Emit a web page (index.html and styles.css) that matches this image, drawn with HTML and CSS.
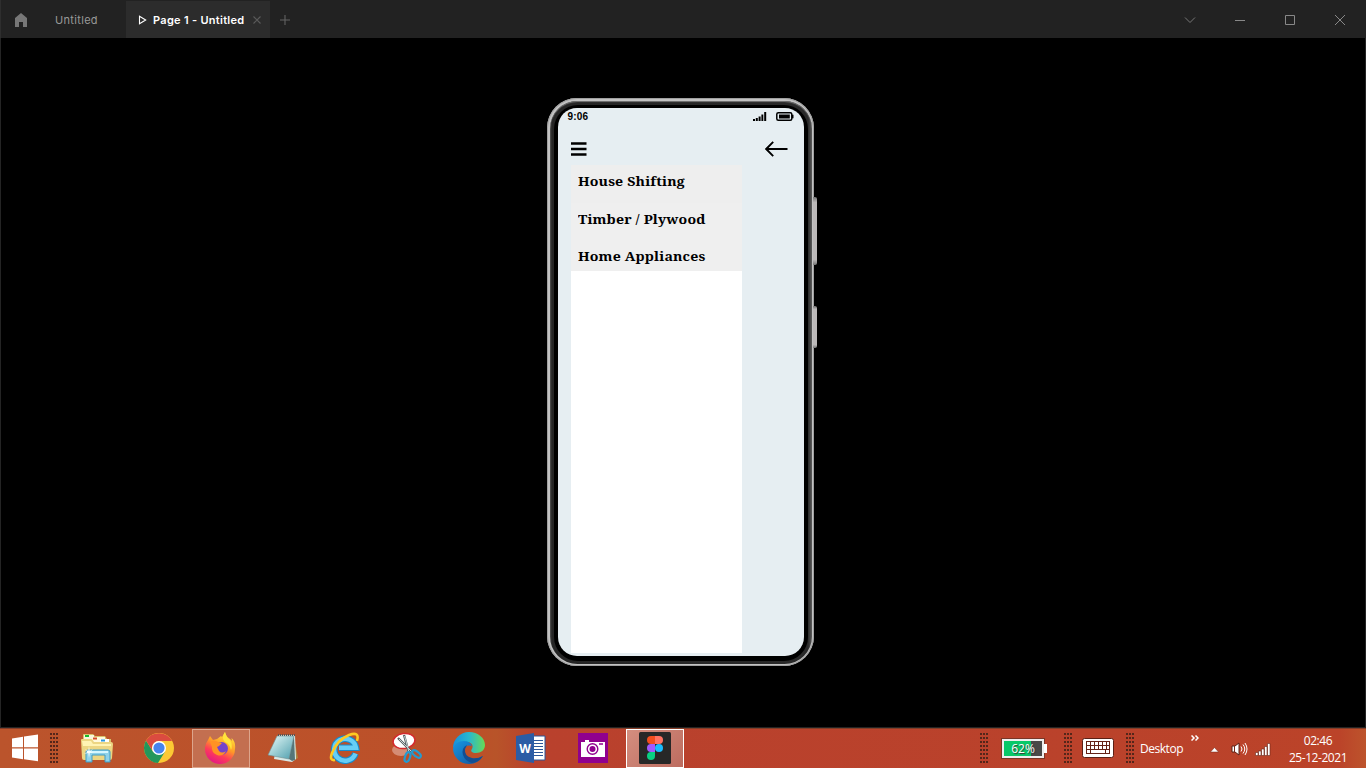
FILE: index.html
```html
<!DOCTYPE html>
<html lang="en">
<head>
<meta charset="utf-8">
<title>Page 1 - Untitled</title>
<link rel="stylesheet" href="styles.css">
</head>
<body>
<header class="titlebar">
  <div class="home"><svg width="14" height="16" viewBox="0 0 14 16"><path d="M7 1 13 6v9H9v-5H5v5H1V6z" fill="#777"/></svg></div>
  <div class="tab"><span class="tab-name">Untitled</span></div>
  <div class="tab active">
    <svg class="play" width="9" height="10" viewBox="0 0 9 10"><path d="M1.5 1.2v7.6L7.7 5z" fill="none" stroke="#fff" stroke-width="1.1"/></svg>
    <span class="active-name">Page 1 - Untitled</span>
    <svg class="close-tab" width="8" height="8" viewBox="0 0 8 8"><path d="m.5.5 7 7m0-7-7 7" stroke="#5b5b5b" stroke-width="1.1"/></svg>
  </div>
  <div class="plus"><svg width="10" height="10" viewBox="0 0 10 10"><path d="M5 0v10M0 5h10" stroke="#626262" stroke-width="1.1"/></svg></div>
  <div class="controls">
    <svg width="12" height="12" viewBox="0 0 12 12"><path d="m1 3.5 5 5 5-5" fill="none" stroke="#777"/></svg>
    <svg width="12" height="12" viewBox="0 0 12 12"><path d="M1 6.5h10" stroke="#888"/></svg>
    <svg width="12" height="12" viewBox="0 0 12 12"><path d="M1.5 1.5h9v9h-9z" fill="none" stroke="#888"/></svg>
    <svg width="12" height="12" viewBox="0 0 12 12"><path d="m1 1 10 10M11 1 1 11" stroke="#888"/></svg>
  </div>
</header>

<main class="stage">
  <div class="phone">
    <i class="side-key volume"></i><i class="side-key power"></i>
    <div class="metal"><div class="bezel"><div class="screen">
      <div class="status">
        <span>9:06</span>
        <svg class="signal" width="14" height="9" viewBox="0 0 14 9"><path d="M0 7h2v2H0zM2.8 6h2v3h-2zM5.6 4.5h2V9h-2zM8.4 2.5h1.900V9H8.4zM11.2 0h2v9h-2z"/></svg>
        <svg class="charge" width="18" height="9" viewBox="0 0 18 9"><rect x=".8" y=".8" width="15" height="7.4" rx="1.5" fill="none" stroke="#000" stroke-width="1.5"/><path d="M3 2.5h10.800v4H3zM16 2.800h1.500v3.400H16z"/></svg>
      </div>
      <div class="appbar">
        <svg width="16" height="14" viewBox="0 0 16 14"><path d="M0 1.500h15.500M0 7h15.500M0 12.500h15.500" stroke="#000" stroke-width="2.300"/></svg>
        <svg width="23" height="16" viewBox="0 0 23 16"><path d="M8.2.9 1.2 8l7 7.1M1.2 8H22.5" fill="none" stroke="#000" stroke-width="1.9"/></svg>
      </div>
      <nav class="drawer">
        <div class="entry first"><span>House Shifting</span></div>
        <div class="entry"><span>Timber / Plywood</span></div>
        <div class="entry last"><span>Home Appliances</span></div>
      </nav>
    </div></div></div>
  </div>
</main>

<footer class="taskbar">
  <svg class="start" width="28" height="28" viewBox="0 0 28 28"><path d="M1 4.4 12 2.8v10.5H1zM13 2.6 27 .6v12.7H13zM1 14.4h11v10.8L1 23.6zM13 14.4h14v12.8l-14-2z" fill="#fff"/></svg>
  <i class="grip"></i>
  <div class="apps">
    <div class="app"><svg width="34" height="32" viewBox="0 0 34 32"><path d="M3 9V3q0-1 1-1h9l2 2h10l2 3h4v5z" fill="#d9c36c"/><path d="M4 3h10v4H4z" fill="#f8f5dc"/><path d="M5 3h4v2H5z" fill="#16bc2d"/><path d="M12 5h13v5H12z" fill="#fff9dc"/><path d="M13 5.500h4v2h-4z" fill="#d34b2c"/><path d="M20 7h9v4h-9z" fill="#fff"/><path d="M21 7.500h4v2h-4z" fill="#2998df"/><path d="M1 8q0-1 1-1h10l2 3h17q2 0 2 2l-1 14q0 2-2 2H4q-2 0-2-2z" fill="#ecd683"/><path d="M2 9h9l2 3h18v2H3z" fill="#fff3b4"/><path d="M6 30V20q0-2 2-2h20q2 0 2 2v10h-5v-7H12v7z" fill="#8ed2e9" stroke="#3e9cc3"/><path d="M7 20h21" stroke="#d4f7ff" stroke-width="2"/><path d="m9 14 .8 5 3.200-2-2.500 3 4 1-4.500-.2L9 26l-.8-5-4.200 1 3.500-2-2.500-3 3.200 2z" fill="#fff" opacity=".8"/></svg></div>
    <div class="app"><svg width="32" height="32" viewBox="0 0 32 32"><circle cx="16" cy="16" r="15" fill="#fcc934"/><path d="M16 16 22.1 19.5 15 31A15 15 0 0 1 3 8.5L9.9 19.5z" fill="#23975b"/><path d="M3 8.5A15 15 0 0 1 29 9H16a7 7 0 0 0-6 10.5z" fill="#db4b40"/><circle cx="16" cy="16" r="7" fill="#fff"/><circle cx="16" cy="16" r="5.600" fill="#4684ed"/></svg></div>
    <div class="app running"><svg width="32" height="32" viewBox="0 0 32 32"><defs><linearGradient id="fire" x1=".8" y1="0" x2=".3" y2="1"><stop stop-color="#fff33d"/><stop offset=".45" stop-color="#ff9a27"/><stop offset=".7" stop-color="#ff3d58"/><stop offset="1" stop-color="#e31587"/></linearGradient></defs><path d="M3 8 5 4l3 4 4-1 4-3 1 1 3-5q1 5 5 7l2 2-.5-3q4.500 4 3.500 11A15 15 0 1 1 3 8z" fill="url(#fire)"/><circle cx="16.500" cy="16.500" r="6.500" fill="#7543cb"/><path d="M5 10q4-3 8 0l4 1-3 3-2 1 2 4q3 3 7 0-3 6-9 4-6-3-5-8z" fill="#ff9224"/><path d="M20 0q1 5 5 8 3 5 1 10-1-6-6-8-4-4 0-10z" fill="#ffe43c"/></svg></div>
    <div class="app"><svg width="32" height="32" viewBox="0 0 32 32"><defs><linearGradient id="paper" x2="1" y2="1"><stop stop-color="#e9fbfc"/><stop offset=".5" stop-color="#9bcdd3"/><stop offset="1" stop-color="#4d9dad"/></linearGradient></defs><path d="m27 5 4 21-5 3-5-2z" fill="#ae8742"/><path d="M11 3h17l1 24-4 3-18-3z" fill="#d8e8e6"/><path d="M10 4h17l-5 23L1 23z" fill="url(#paper)" stroke="#708d8e" stroke-width=".6"/><path d="m22 27 5-23 1 24-3 1z" fill="#557679"/><path d="M11 3h17" stroke="#555" stroke-width="2" stroke-dasharray="1 1"/></svg></div>
    <div class="app"><svg width="32" height="32" viewBox="0 0 32 32"><path d="M26.500 21.500A11 11 0 1 1 27 15.800H10" fill="none" stroke="#168bcc" stroke-width="6.600"/><path d="M26.500 21.500A11 11 0 1 1 27 15.800H10" fill="none" stroke="#67cef6" stroke-width="4.500"/><path d="M6 28q-6 1-3-7Q8 8 20 3q11-4 8 6" fill="none" stroke="#ffc921" stroke-width="2.600"/></svg></div>
    <div class="app"><svg width="32" height="32" viewBox="0 0 32 32"><ellipse cx="10" cy="18" rx="9" ry="6" fill="#dda08e" opacity=".75"/><ellipse cx="13" cy="9" rx="11" ry="7.500" transform="rotate(-8 13 9)" fill="#fff" stroke="#d4292d" stroke-width="1.500"/><path d="m7 6 15 15M13 3l5 18" stroke="#555f62" stroke-width="2.300"/><path d="m8 7 13 13M13.500 4l4.500 16" stroke="#c6d1d4"/><ellipse cx="16.500" cy="25" rx="2.500" ry="5" transform="rotate(18 16.500 25)" fill="none" stroke="#249bd0" stroke-width="2.200"/><ellipse cx="25.500" cy="22" rx="2.500" ry="5" transform="rotate(-52 25.500 22)" fill="none" stroke="#249bd0" stroke-width="2.200"/></svg></div>
    <div class="app"><svg width="32" height="32" viewBox="0 0 32 32"><defs><linearGradient id="wave"><stop stop-color="#178fdd"/><stop offset=".5" stop-color="#28b7cf"/><stop offset="1" stop-color="#68dc54"/></linearGradient><linearGradient id="deep" x2="1" y2="1"><stop stop-color="#1796e3"/><stop offset="1" stop-color="#125298"/></linearGradient></defs><path d="M0 16A16 16 0 0 1 16 0c9 0 16 6 16 13 0 5-4 8-9 8-4 0-6-2-4-4 2-4-1-7-5-7Q5 10 0 16z" fill="url(#wave)"/><path d="M0 17q2-8 11-8 6 0 8 5-7-2-8 5-1 7 9 8 5 0 10-3-5 8-14 8A16 16 0 0 1 0 17z" fill="url(#deep)"/><path d="M14 13q-6 3-4 10 2 6 9 8 7-1 11-7-5 3-11 2-8-2-7-9z" fill="#124e92"/></svg></div>
    <div class="app"><svg width="30" height="30" viewBox="0 0 30 30"><path d="M16 3h13v24H16z" fill="#fff" stroke="#2b579a"/><path d="M18 7.500h9m-9 3h9m-9 3h9m-9 3h9m-9 3h9m-9 3h9" stroke="#2b579a"/><path d="m0 3 18-3v30L0 27z" fill="#2b5ca5"/><text x="9" y="19.500" class="word-letter">W</text></svg></div>
    <div class="app"><svg width="30" height="30" viewBox="0 0 30 30"><path d="M0 0h30v30H0z" fill="#90008e"/><path d="M3 9h4V7h4v2h16v15H3z" fill="#fff"/><circle cx="14.500" cy="16" r="6.300" fill="#fff"/><circle cx="14.500" cy="16" r="5.300" fill="#fff" stroke="#90008e" stroke-width="1.400"/><circle cx="14.500" cy="16" r="3" fill="#90008e"/><path d="M21 11h4" stroke="#90008e" stroke-width="1.500"/></svg></div>
    <div class="app current"><svg width="32" height="32" viewBox="0 0 32 32"><rect width="32" height="32" rx="1.500" fill="#272727"/><path d="M16 4h-4a4 4 0 0 0 0 8h4z" fill="#f24e1e"/><path d="M16 4h4a4 4 0 0 1 0 8h-4z" fill="#ff7262"/><path d="M16 12h-4a4 4 0 0 0 0 8h4z" fill="#a259ff"/><circle cx="20" cy="16" r="4" fill="#1abcfe"/><path d="M16 20h-4a4 4 0 1 0 4 4z" fill="#0acf83"/></svg></div>
  </div>
  <div class="tray">
    <i class="grip"></i>
    <div class="battery"><div class="battery-body"><span>62%</span></div><i></i></div>
    <i class="grip grip-keyboard"></i>
    <svg class="keyboard" width="32" height="20" viewBox="0 0 32 20"><rect x=".5" y=".5" width="31" height="19" rx="2" fill="#fff" stroke="#5b2015"/><path d="M4 3.500h24M4 7.500h24M4 11.500h24M4 15.500h24M4.500 3v13M8.500 3v8M12.500 3v8M16.500 3v8M20.500 3v8M24.500 3v8M27.500 3v13M8.500 11v5M23.500 11v5" stroke="#642317" fill="none"/></svg>
    <i class="grip grip-desktop"></i>
    <span class="desktop">Desktop</span>
    <svg class="chevrons" width="8" height="6" viewBox="0 0 8 6"><path d="m.5.5 2.500 2.500-2.500 2.500m4-5L7 3 4.500 5.500" stroke="#fff" stroke-width="1.500" fill="none"/></svg>
    <svg class="up" width="9" height="6" viewBox="0 0 9 6"><path d="m4.500.5 4 4.500h-8z" fill="#fff" stroke="#722a1b" stroke-width=".5"/></svg>
    <svg class="speaker" width="17" height="14" viewBox="0 0 17 14"><path d="M1 4h3l4-3v12L4 10H1z" fill="#fff" stroke="#5b2015"/><path d="M3.500 4v6" stroke="#732a1d"/><path d="M10 4.500q2 2.500 0 5M12 2.500q3.500 4.500 0 9M14 1q4 6 0 12" fill="none" stroke="#fff"/></svg>
    <svg class="network" width="16" height="13" viewBox="0 0 16 13"><path d="M.5 9.500h2.500v3H.5zM3.500 8H6v4.500H3.500zM6.500 6H9v6.500H6.500zM9.500 3.500H12v9H9.500zM12.500.5h2.500v12h-2.500z" fill="#fff" stroke="#682719" stroke-width=".6"/></svg>
    <div class="clock"><span>02:46</span><span class="date">25-12-2021</span></div>
  </div>
</footer>
</body>
</html>
```
FILE: styles.css
```css
* { box-sizing: border-box; }
body { margin: 0; width: 1366px; height: 768px; overflow: hidden; display: flex; flex-direction: column; background: #000; font-family: Inter, sans-serif; }
svg { display: block; flex: none; }
.titlebar { height: 38px; flex: none; display: flex; align-items: center; background: #222; color: #999; font-size: 11px; padding-top: 1px; border-left: 1px solid #2e2e2e; }
.home { width: 39px; padding-left: 13px; }
.tab { width: 86px; height: 37px; display: flex; align-items: center; padding-left: 15px; }
.tab-name { letter-spacing: .32px; }
.active { width: 144px; padding-left: 12px; background: #2c2c2c; color: #fff; font-weight: 600; white-space: nowrap; }
.active-name { width: 92px; margin-left: 6px; letter-spacing: .29px; }
.close-tab { margin-left: 8px; }
.plus { padding-left: 10px; }
.controls { margin-left: auto; padding-right: 20px; display: flex; gap: 38px; }
.stage { height: 690px; flex: none; border: solid #242424; border-width: 0 1px 1px; padding: 60px 0 0 546px; }
.phone { position: relative; width: 267px; height: 568px; padding: 2.5px; border-radius: 30px; background: #c2c2c2; box-shadow: inset 0 0 0 1px #a0a0a0; }
.side-key { position: absolute; left: 266px; width: 4px; border-radius: 0 2px 2px 0; background: linear-gradient(#777,#bcb9b9 8%,#bcb9b9 92%,#777); }
.volume { top: 99px; height: 68px; }
.power { top: 208px; height: 42px; }
.metal { height: 100%; padding: 4px 4px 3px; border-radius: 27.5px; background: linear-gradient(90deg,#4d4d4d,#252525 2px,#292929 258px,#595959); box-shadow: inset 0 1px 1px #777; }
.bezel { height: 100%; padding: 3px 4px 4px; border-radius: 24px; background: #000; }
.screen { height: 548.5px; width: 246.5px; overflow: hidden; padding: 0 10px; border-radius: 19px; background: #e6eef2; color: #000; }
.status { height: 18px; display: flex; align-items: center; font: bold 10px/18px "Liberation Sans", Arial, sans-serif; letter-spacing: .2px; }
.signal { margin-left: auto; }
.charge { margin-left: 9px; }
.appbar { display: flex; height: 39px; align-items: center; justify-content: space-between; padding: 8px 6px 0 3px; }
.drawer { width: 171px; height: 488.5px; margin-left: 3.5px; background: #fff; }
.entry { height: 38px; padding: 6px 7px; background: #efefef; white-space: nowrap; font: bold 13px/20px "Noto Serif","DejaVu Serif",serif; letter-spacing: .15px; }
.entry span { display: inline-block; transform: scaleX(1.087); transform-origin: left center; }
.first { background: #eee; }
.last { height: 30px; padding-top: 5px; }
.taskbar { height: 40px; flex: none; display: flex; align-items: center; background: linear-gradient(90deg,#bb542c 0%,#bc5029 35%,#b85429 36.3%,#b9412d 39%,#ba422b 80%,#bb4329 98%,#bd542c 100%); border-top: 1px solid #863d27; color: #fff; font-family: "Open Sans", sans-serif; font-size: 12px; letter-spacing: -.4px; }
.start { margin-left: 11px; margin-bottom: 1px; }
.grip { width: 9px; height: 31px; flex: none; background: radial-gradient(circle at 1px 1px,#54261a 1px,transparent 1.3px) 0 0 / 3px 4px; }
.start + .grip { margin-left: 11px; }
.apps { display: flex; height: 39px; gap: 4px; margin-left: 9px; }
.app { width: 58px; padding-bottom: 1px; display: flex; align-items: center; justify-content: center; }
.running { border: 1px solid #dda58c; background: #c36f50; }
.current { border: 1px solid #fff; background: linear-gradient(135deg,#d38e7f,#bd6c5f); }
.word-letter { fill: #fff; font: bold 12px "Open Sans", sans-serif; text-anchor: middle; letter-spacing: 0; }
.tray { margin-left: auto; display: flex; align-items: center; width: 386px; height: 39px; }
.battery { display: flex; align-items: center; margin-left: 13px; margin-bottom: 1px; }
.battery-body { width: 42px; height: 19px; border: 2px solid #eee; outline: 1px solid #793627; background: linear-gradient(90deg,#08c868 72%,#494949 72%); line-height: 15px; text-align: center; letter-spacing: 0; text-shadow: 1px 1px 1px #333; }
.battery > i { width: 3px; height: 9px; background: #fff; }
.grip-keyboard { margin-left: 17px; }
.keyboard { margin-left: 9px; margin-bottom: 1px; }
.grip-desktop { margin-left: 12px; }
.desktop { width: 44px; margin-left: 5px; letter-spacing: -.47px; }
.chevrons { margin-left: 7px; margin-bottom: 21px; }
.up { margin-left: 11px; margin-top: 2px; }
.speaker { margin-left: 12px; }
.network { margin-left: 7px; margin-top: 1px; }
.clock { margin-left: 14px; display: flex; flex-direction: column; width: 66px; text-align: center; line-height: 17px; }
.date { letter-spacing: -.45px; }
```
